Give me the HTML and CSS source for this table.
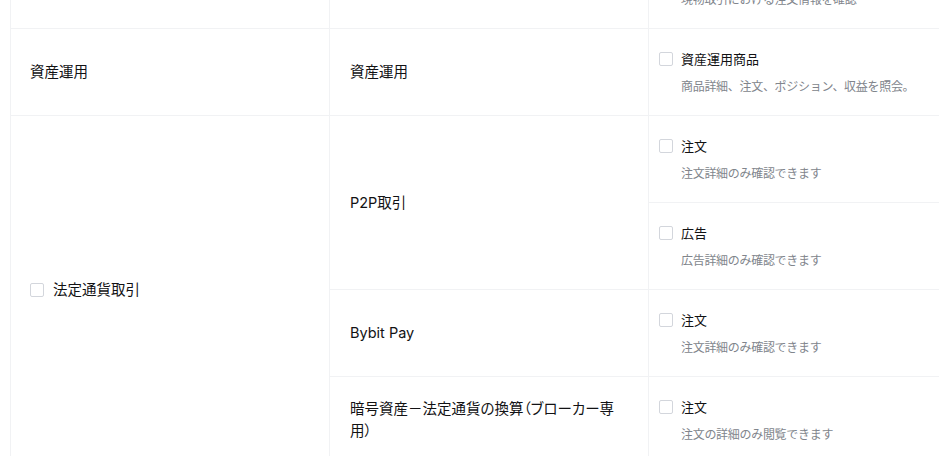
FILE: index.html
```html
<!DOCTYPE html>
<html lang="ja">
<head>
<meta charset="utf-8">
<link rel="stylesheet" href="styles.css">
</head>
<body>
<div class="viewport">
<table class="perm">
  <colgroup><col class="c1"><col class="c2"><col class="c3"></colgroup>
  <tbody>
    <tr>
      <td class="cat"></td>
      <td class="sub"></td>
      <td class="opt">
        <div class="opt-head"><span class="cb"></span><span class="opt-title">注文</span></div>
        <div class="opt-desc">現物取引における注文情報を確認</div>
      </td>
    </tr>
    <tr>
      <td class="cat">資産運用</td>
      <td class="sub">資産運用</td>
      <td class="opt">
        <div class="opt-head"><span class="cb"></span><span class="opt-title">資産運用商品</span></div>
        <div class="opt-desc">商品詳細、注文、ポジション、収益を照会。</div>
      </td>
    </tr>
    <tr>
      <td class="cat" rowspan="4"><div class="cat-head"><span class="cb"></span><span>法定通貨取引</span></div></td>
      <td class="sub" rowspan="2">P2P取引</td>
      <td class="opt">
        <div class="opt-head"><span class="cb"></span><span class="opt-title">注文</span></div>
        <div class="opt-desc">注文詳細のみ確認できます</div>
      </td>
    </tr>
    <tr>
      <td class="opt">
        <div class="opt-head"><span class="cb"></span><span class="opt-title">広告</span></div>
        <div class="opt-desc">広告詳細のみ確認できます</div>
      </td>
    </tr>
    <tr>
      <td class="sub">Bybit Pay</td>
      <td class="opt">
        <div class="opt-head"><span class="cb"></span><span class="opt-title">注文</span></div>
        <div class="opt-desc">注文詳細のみ確認できます</div>
      </td>
    </tr>
    <tr>
      <td class="sub">暗号資産－法定通貨の換算（ブローカー専用）</td>
      <td class="opt">
        <div class="opt-head"><span class="cb"></span><span class="opt-title">注文</span></div>
        <div class="opt-desc">注文の詳細のみ閲覧できます</div>
      </td>
    </tr>
  </tbody>
</table>
</div>
</body>
</html>
```
FILE: styles.css
```css
html, body {
  margin: 0;
  padding: 0;
  background: #ffffff;
  overflow: hidden;
}
body {
  font-family: "Inter", "Noto Sans CJK JP", sans-serif;
  color: #121214;
}
.viewport {
  width: 939px;
  height: 456px;
  overflow: hidden;
}
.perm {
  margin: -58px 0 0 10px;
  border-collapse: separate;
  border-spacing: 0;
  table-layout: fixed;
  width: 957px;
  border-left: 1px solid #f1f2f4;
}
.c1, .c2, .c3 { width: 319px; }
.perm td {
  border-right: 1px solid #f1f2f4;
  border-bottom: 1px solid #f1f2f4;
  vertical-align: middle;
  box-sizing: border-box;
}
.cat, .sub {
  padding: 0 20px;
  font-size: 14.5px;
  line-height: 22px;
  font-feature-settings: "palt";
}
.cat { padding-left: 19px; }
.opt {
  padding: 20px 10px 18px;
  height: 87px;
}
.opt-head, .cat-head {
  display: flex;
  align-items: center;
  gap: 8px;
}
.cat-head { gap: 9px; }
.opt-title {
  font-size: 13px;
  line-height: 20px;
}
.cb {
  width: 14px;
  height: 14px;
  box-sizing: border-box;
  border: 1px solid #d3d6dc;
  border-radius: 2px;
  flex: none;
}
.opt-desc {
  margin: 8px 0 0 22px;
  font-size: 12px;
  line-height: 20px;
  color: #81858c;
  letter-spacing: -0.3px;
}
```
